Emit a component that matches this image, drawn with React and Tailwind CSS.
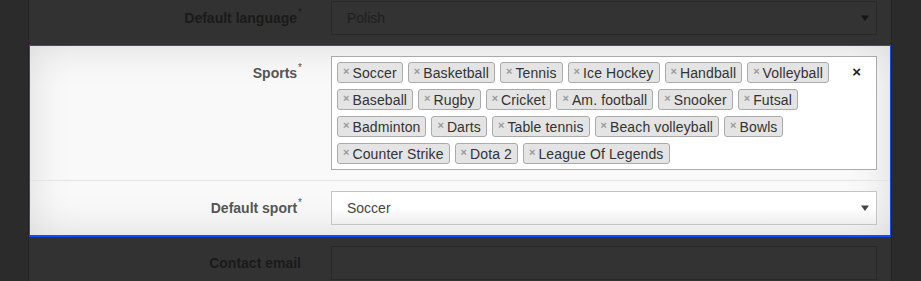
import React from "react";

const sports = [
  "Soccer", "Basketball", "Tennis", "Ice Hockey", "Handball", "Volleyball",
  "Baseball", "Rugby", "Cricket", "Am. football", "Snooker", "Futsal",
  "Badminton", "Darts", "Table tennis", "Beach volleyball", "Bowls",
  "Counter Strike", "Dota 2", "League Of Legends",
];

function Arrow({ color }) {
  return (
    <svg width="8" height="6" viewBox="0 0 8 6" className="shrink-0">
      <path d="M0 0.5 H8 L4 6 Z" fill={color} />
    </svg>
  );
}

function Label({ children, dark, required = true, className = "" }) {
  return (
    <div className={`text-right font-bold text-[14px] ${dark ? "text-[#1a1a1a]" : "text-[#555555]"} ${className}`}>
      {children}
      {required && (
        <span className="relative top-[-7px] ml-px text-[10px] font-normal leading-none">*</span>
      )}
    </div>
  );
}

export default function App() {
  return (
    <div className="min-h-[281px] bg-[#2b2b2b] font-['Liberation_Sans',Arial,sans-serif] text-[14px] overflow-hidden">
      <div className="ml-[28px] w-[864px] h-[281px] border-x border-[#242424] bg-[#323232]">
        {/* Default language (dimmed) */}
        <div className="flex items-center pt-px pb-[10px]">
          <Label dark className="w-[273px]">Default language</Label>
          <div className="ml-[29px] mr-[14px] flex-1 h-[34px] border border-[#292929] bg-[#333333] flex items-center justify-between pl-[15px] pr-[7px] text-[#1e1e1e]">
            <span>Polish</span>
            <Arrow color="#141414" />
          </div>
        </div>

        {/* Highlighted panel */}
        <div className="border border-b-2 border-[#0d4cff] bg-[#f9f9f9] shadow-[inset_0_0_40px_rgba(0,0,0,0.13)]">
          <div className="flex items-start pt-[10px] pb-[10px] border-b border-[#e4e4e4]">
            <Label className="w-[272px] pt-[7px]">Sports</Label>
            <div className="relative ml-[29px] mr-[13px] flex-1 border border-[#aaaaaa] bg-white pt-[5px] pb-[5px] pl-[5px] pr-[30px] flex flex-wrap gap-x-[5px] gap-y-[6px]">
              {sports.map((s) => (
                <div
                  key={s}
                  className="h-[21px] flex items-center border border-[#aaaaaa] rounded-[3px] bg-[#e4e4e4] pl-[5px] pr-[5px] text-[#333333] leading-none"
                >
                  <span className="text-[11px] font-bold text-[#999999] mr-[3px] relative top-[-1px]">×</span>
                  <span className="tracking-[0.12px]">{s}</span>
                </div>
              ))}
              <span className="absolute right-[15px] top-[7px] text-[15px] font-bold text-[#222222] leading-none">×</span>
            </div>
          </div>
          <div className="flex items-center pt-[10px] pb-[10px]">
            <Label className="w-[272px]">Default sport</Label>
            <div className="ml-[29px] mr-[13px] flex-1 h-[34px] border border-[#c4c4c4] bg-gradient-to-b from-white from-50% to-[#eeeeee] flex items-center justify-between pl-[15px] pr-[7px] text-[#444444]">
              <span>Soccer</span>
              <Arrow color="#444444" />
            </div>
          </div>
        </div>

        {/* Contact email (dimmed) */}
        <div className="flex items-center pt-[9px]">
          <Label dark required={false} className="w-[273px] pr-[1px]">Contact email</Label>
          <div className="ml-[29px] mr-[14px] flex-1 h-[34px] border border-[#292929] bg-[#333333]" />
        </div>
      </div>
    </div>
  );
}
